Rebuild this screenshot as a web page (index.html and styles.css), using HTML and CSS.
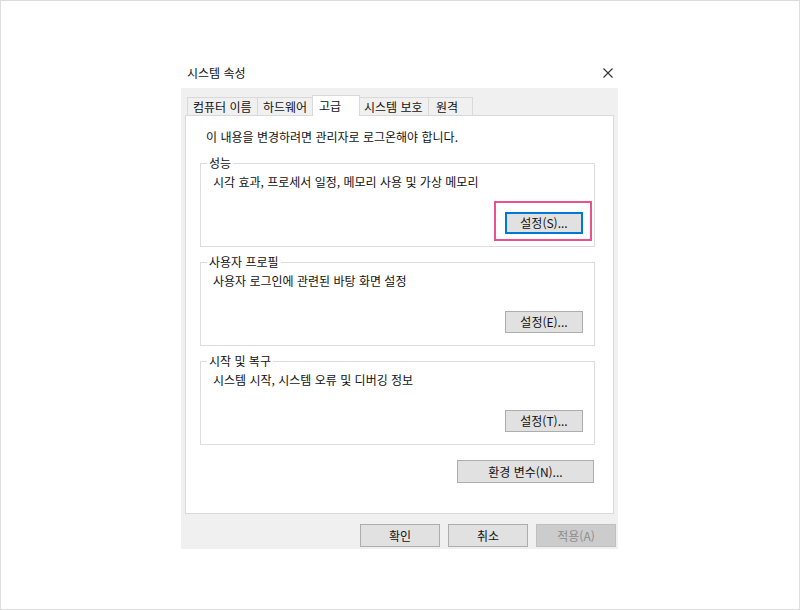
FILE: index.html
```html
<!DOCTYPE html>
<html lang="ko">
<head>
<meta charset="utf-8">
<title>시스템 속성</title>
<link rel="stylesheet" href="styles.css">
</head>
<body>
<div class="frame">
  <div class="dialog">
    <div class="titlebar">
      <span class="title">시스템 속성</span>
      <svg class="close" width="10" height="10" viewBox="0 0 10 10"><path d="M0.5 0.5L9.5 9.5M9.5 0.5L0.5 9.5" stroke="#333" stroke-width="1.1" fill="none"/></svg>
    </div>
    <div class="body">
      <div class="tabs">
        <div class="tab tab-name">컴퓨터 이름</div>
        <div class="tab tab-hw">하드웨어</div>
        <div class="tab tab-adv active">고급</div>
        <div class="tab tab-prot">시스템 보호</div>
        <div class="tab tab-remote">원격</div>
      </div>
      <div class="panel">
        <p class="notice">이 내용을 변경하려면 관리자로 로그온해야 합니다.</p>
        <fieldset class="group">
          <legend>성능</legend>
          <p class="desc">시각 효과, 프로세서 일정, 메모리 사용 및 가상 메모리</p>
          <div class="btn-row"><span class="hl"><button class="btn btn-default">설정(S)...</button></span></div>
        </fieldset>
        <fieldset class="group">
          <legend>사용자 프로필</legend>
          <p class="desc">사용자 로그인에 관련된 바탕 화면 설정</p>
          <div class="btn-row"><button class="btn">설정(E)...</button></div>
        </fieldset>
        <fieldset class="group">
          <legend>시작 및 복구</legend>
          <p class="desc">시스템 시작, 시스템 오류 및 디버깅 정보</p>
          <div class="btn-row"><button class="btn">설정(T)...</button></div>
        </fieldset>
        <div class="env-row"><button class="btn btn-wide">환경 변수(N)...</button></div>
      </div>
      <div class="footer">
        <button class="btn btn-foot">확인</button>
        <button class="btn btn-foot">취소</button>
        <button class="btn btn-foot btn-disabled">적용(A)</button>
      </div>
    </div>
  </div>
</div>
</body>
</html>
```
FILE: styles.css
```css
html, body {
  margin: 0;
  padding: 0;
  background: #fff;
}
body {
  font-family: "Noto Sans CJK KR", "Noto Sans", sans-serif;
  font-size: 12px;
  color: #111;
}
.frame {
  width: 800px;
  height: 610px;
  box-sizing: border-box;
  border: 1px solid #dcdcdc;
  padding: 54px 0 0 180px;
}
.dialog {
  width: 437px;
}
.titlebar {
  height: 33px;
  display: flex;
  align-items: center;
  justify-content: space-between;
  padding: 0 5px 0 6px;
}
.title {
  line-height: 16px;
  margin-top: 2px;
}
.close {
  display: block;
  margin-top: 2px;
}
.body {
  background: #f0f0f0;
  height: 461px;
  box-sizing: border-box;
  padding: 7px 4px 0;
}
.tabs {
  display: flex;
  align-items: flex-start;
  height: 21px;
  margin: 0 0 -1px 2px;
  position: relative;
  z-index: 1;
}
.tab {
  height: 18px;
  margin-top: 2px;
  box-sizing: border-box;
  border: 1px solid #d9d9d9;
  border-bottom: none;
  background: #f0f0f0;
  padding: 0 0 0 5px;
  line-height: 17px;
  white-space: nowrap;
}
.tab + .tab {
  margin-left: -1px;
}
.tab-name { width: 71px; }
.tab-hw { width: 56px; }
.tab-adv { width: 48px; padding-left: 6px; }
.tab-prot { width: 70px; padding-left: 4px; }
.tab-remote { width: 45px; padding-left: 7px; }
.tab.active {
  height: 21px;
  margin-top: 0;
  background: #fff;
  line-height: 19px;
  position: relative;
  z-index: 1;
}
.panel {
  background: #fff;
  border: 1px solid #d9d9d9;
  height: 399px;
  box-sizing: border-box;
  padding: 13px 18px 0 14px;
}
.notice {
  margin: 0 0 0 6px;
  line-height: 16px;
}
.group {
  margin: 7px 0 0;
  padding: 3px 11px 12px 12px;
  border: 1px solid #dcdcdc;
  min-width: 0;
}
.notice + .group {
  margin-top: 10px;
}
.group legend {
  padding: 0 2px;
  margin-left: -6px;
  line-height: 16px;
}
.desc {
  margin: 0;
  line-height: 16px;
}
.btn-row {
  display: flex;
  justify-content: flex-end;
  margin-top: 22px;
}
.btn {
  font-family: inherit;
  font-size: 12px;
  color: #111;
  background: #e1e1e1;
  border: 1px solid #adadad;
  height: 22px;
  width: 78px;
  padding: 0;
  box-sizing: border-box;
  line-height: 18px;
}
.btn-default {
  border-color: #0078d7;
  box-shadow: inset 0 0 0 1px #0078d7;
}
.hl {
  position: relative;
  display: block;
}
.hl::after {
  content: "";
  position: absolute;
  left: -11px;
  right: -9px;
  top: -11px;
  bottom: -7px;
  border: 2px solid #e9528d;
}
.env-row {
  display: flex;
  justify-content: flex-end;
  margin-top: 15px;
  padding-right: 1px;
}
.btn-wide {
  width: 137px;
  height: 23px;
}
.footer {
  display: flex;
  justify-content: flex-end;
  gap: 8px;
  padding-top: 10px;
  margin-right: -2px;
}
.btn-foot {
  width: 80px;
  height: 23px;
}
.btn-disabled {
  background: #cccccc;
  border-color: #bfbfbf;
  color: #8d8d8d;
}
```
